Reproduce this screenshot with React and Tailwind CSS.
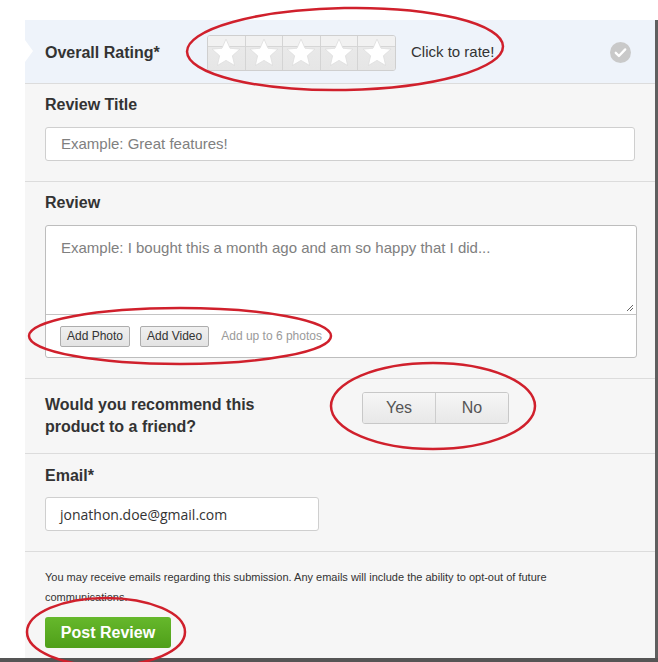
import React from "react";

const font = { fontFamily: '"Liberation Sans", Arial, sans-serif' };

function Star() {
  return (
    <svg width="30" height="29" viewBox="0 0 24 23">
      <path
        d="M12 0.8l3.2 7.3 7.9.7-6 5.3 1.8 7.8L12 17.8l-6.9 4.1 1.8-7.8-6-5.3 7.9-.7z"
        fill="#ffffff"
        stroke="#dcdcdc"
        strokeWidth="0.6"
      />
    </svg>
  );
}

function StarBox() {
  return (
    <div className="flex h-[36px] w-[189px] overflow-hidden rounded-[3px] border border-[#cfcfcf]">
      {[0, 1, 2, 3, 4].map((i) => (
        <div
          key={i}
          className="flex flex-1 items-center justify-center border-r border-[#d4d4d4] last:border-r-0 bg-[linear-gradient(#f1f1f1_0,#f1f1f1_30%,#d6d6d6_30%,#d6d6d6_33%,#e9e9e9_33%,#e6e6e6_100%)]"
        >
          <Star />
        </div>
      ))}
    </div>
  );
}

function CheckCircle() {
  return (
    <svg width="21" height="21" viewBox="0 0 20 20">
      <circle cx="10" cy="10" r="10" fill="#c9c9c9" />
      <path d="M5.5 10.3l3 3 6-6.3" fill="none" stroke="#fff" strokeWidth="2.2" strokeLinecap="round" strokeLinejoin="round" />
    </svg>
  );
}

function Label({ children }) {
  return <div className="text-[16px] font-bold leading-[20px] text-[#333]">{children}</div>;
}

function SmallBtn({ children }) {
  return (
    <button className="h-[21px] rounded-[2px] border border-[#adadad] bg-[linear-gradient(#f0f0f0,#e3e3e3)] px-[6px] text-[12px] leading-[19px] text-[#333]">
      {children}
    </button>
  );
}

export default function App() {
  return (
    <div className="relative h-[662px] w-[658px] overflow-hidden bg-white" style={font}>
      <div className="flex h-[662px] pt-[20px]">
        <div className="w-[25px] shrink-0" />
        <div className="relative w-[630px] shrink-0 bg-[#f6f6f6]">
          {/* rating row */}
          <div className="relative flex h-[64px] items-center border-b border-[#dcdcdc] bg-[#eef3fa] pl-[20px] pr-[24px] pt-[2px]">
            <div className="absolute left-0 top-[20px] h-0 w-0 border-y-[11px] border-l-[8px] border-y-transparent border-l-white" />
            <div className="w-[162px] text-[16px] font-bold text-[#333]">Overall Rating*</div>
            <StarBox />
            <div className="ml-[15px] text-[15px] text-[#333]">Click to rate!</div>
            <div className="ml-auto flex items-center">
              <CheckCircle />
            </div>
          </div>

          {/* review title */}
          <div className="border-b border-[#dcdcdc] px-[20px] pb-[20px] pt-[11px]">
            <Label>Review Title</Label>
            <div className="mt-[12px] flex h-[34px] items-center rounded-[3px] border border-[#cfcfcf] bg-white pl-[15px] text-[15px] text-[#808080]">
              Example: Great features!
            </div>
          </div>

          {/* review */}
          <div className="border-b border-[#dcdcdc] pb-[20px] pl-[20px] pt-[11px]">
            <Label>Review</Label>
            <div className="mt-[12px] w-[592px] rounded-[3px] border border-[#bdbdbd] bg-white">
              <div className="relative h-[89px] border-b border-[#c4c4c4] pl-[15px] pt-[11px] text-[15px] text-[#808080]">
                Example: I bought this a month ago and am so happy that I did...
                <svg className="absolute bottom-[2px] right-[2px]" width="8" height="8" viewBox="0 0 8 8">
                  <path d="M1 7L7 1M4 7L7 4" stroke="#666" strokeWidth="1" />
                </svg>
              </div>
              <div className="flex h-[42px] items-center gap-[10px] pl-[14px]">
                <SmallBtn>Add Photo</SmallBtn>
                <SmallBtn>Add Video</SmallBtn>
                <span className="ml-[2px] text-[12px] text-[#9a9a9a]">Add up to 6 photos</span>
              </div>
            </div>
          </div>

          {/* recommend */}
          <div className="flex h-[75px] border-b border-[#dcdcdc] pl-[20px] pt-[12px]">
            <div className="w-[317px] pt-[3px] text-[16px] font-bold leading-[22px] text-[#333]">
              Would you recommend this
              <br />
              product to a friend?
            </div>
            <div className="mt-[1px] flex h-[32px] w-[147px] overflow-hidden rounded-[3px] border border-[#c8c8c8] text-[16px] text-[#555]">
              <div className="flex flex-1 items-center justify-center border-r border-[#cdcdcd] bg-[linear-gradient(#f6f6f6,#e8e8e8)]">Yes</div>
              <div className="flex flex-1 items-center justify-center bg-[linear-gradient(#f6f6f6,#e8e8e8)]">No</div>
            </div>
          </div>

          {/* email */}
          <div className="border-b border-[#dcdcdc] px-[20px] pb-[20px] pt-[12px]">
            <Label>Email*</Label>
            <div
              className="mt-[11px] flex h-[34px] w-[274px] items-center rounded-[3px] border border-[#cfcfcf] bg-white pl-[14px] text-[14px] text-[#333]"
              style={{ fontFamily: '"Open Sans", "DejaVu Sans", sans-serif' }}
            >
              jonathon.doe@gmail.com
            </div>
          </div>

          {/* footer */}
          <div className="px-[20px] pt-[15px]">
            <p className="max-w-[560px] text-[11px] leading-[20px] text-[#333]">
              You may receive emails regarding this submission. Any emails will include the ability to opt-out of future communications.
            </p>
            <button className="mt-[10px] h-[31px] w-[126px] rounded-[3px] bg-[linear-gradient(#66b82c,#4f9f19)] text-[16px] font-bold text-white">
              Post Review
            </button>
          </div>
        </div>
        <div className="w-[3px] shrink-0 bg-[#5f5f5f]" />
      </div>
      <div className="absolute bottom-0 left-0 h-[4px] w-full bg-[#555]" />

      {/* red annotations */}
      <svg className="pointer-events-none absolute left-0 top-0" width="658" height="662" viewBox="0 0 658 662">
        <g fill="none" stroke="#d0202c" strokeWidth="2.5">
          <ellipse cx="345" cy="49" rx="158" ry="41" transform="rotate(-1 345 49)" />
          <ellipse cx="180" cy="336" rx="151" ry="28" />
          <ellipse cx="433" cy="406" rx="102" ry="43" />
          <ellipse cx="106" cy="632" rx="79" ry="34" />
        </g>
      </svg>
    </div>
  );
}
